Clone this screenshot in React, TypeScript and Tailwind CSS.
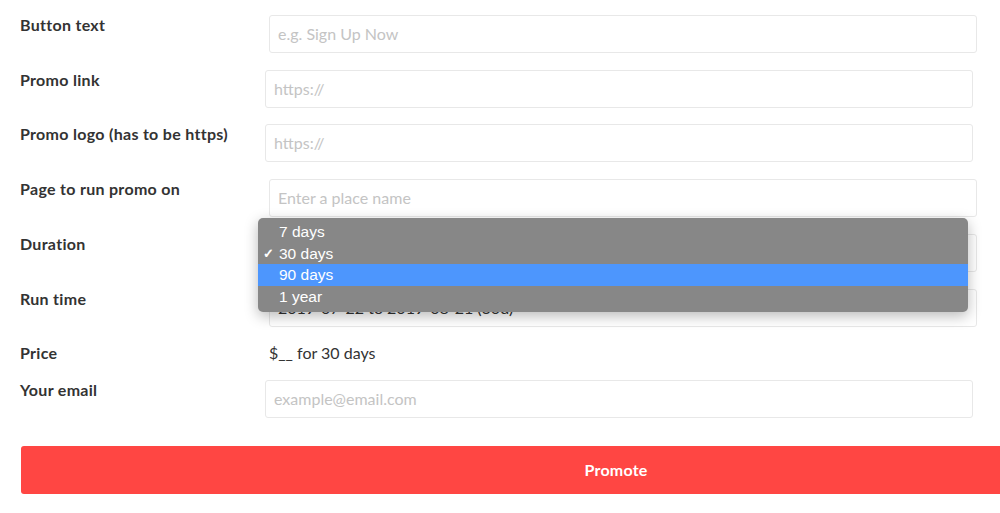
import { ReactNode } from 'react';

const font = { fontFamily: 'Lato, "Noto Sans", sans-serif' };

interface RowProps {
  label: string;
  children: ReactNode;
  className?: string;
}

const Row = ({ label, children, className = '' }: RowProps) => (
  <div className={`grid grid-cols-[245px_1fr] items-start ${className}`}>
    <label className="text-[16px] leading-5 font-bold tracking-[0.3px] text-[#333]">{label}</label>
    {children}
  </div>
);

const Field = ({ placeholder, shift, value }: { placeholder?: string; shift?: boolean; value?: string }) => (
  <div
    className={`h-[38px] w-[708px] rounded-[3px] border border-[#e8e8e8] bg-white flex items-center px-2 text-[16px] ${
      shift ? 'ml-1' : ''
    } ${value ? 'text-[#333]' : 'text-[#c4c4c4]'}`}
  >
    {value ?? placeholder}
  </div>
);

const options = ['7 days', '30 days', '90 days', '1 year'];

const DurationMenu = () => (
  <div
    className="absolute left-[-11px] top-[-16px] w-[710px] rounded-[5px] bg-[#878787] pt-[3px] pb-[5px] shadow-[0_4px_14px_rgba(0,0,0,0.28)] z-10"
    style={{ fontFamily: '"Liberation Sans", Arial, sans-serif' }}
  >
    {options.map((opt) => (
      <div
        key={opt}
        className={`h-[21.5px] flex items-center text-[15.5px] text-white ${opt === '90 days' ? 'bg-[#4d96fd]' : ''}`}
      >
        <span className="w-[21px] pl-[5px] text-[13px] font-bold">{opt === '30 days' ? '✓' : ''}</span>
        {opt}
      </div>
    ))}
  </div>
);

export default function App() {
  return (
    <div className="w-[1000px] h-[513px] overflow-hidden bg-white" style={font}>
      <div className="pl-5 pt-[15px] flex flex-col">
        <Row label="Button text">
          <Field placeholder="e.g. Sign Up Now" shift />
        </Row>
        <Row label="Promo link" className="mt-[17px]">
          <Field placeholder="https://" />
        </Row>
        <Row label="Promo logo (has to be https)" className="mt-4">
          <Field placeholder="https://" />
        </Row>
        <Row label="Page to run promo on" className="mt-[17px]">
          <Field placeholder="Enter a place name" shift />
        </Row>
        <Row label="Duration" className="mt-[17px]">
          <div className="relative ml-1">
            <div className="h-[38px] w-[708px] rounded-[3px] border border-[#e8e8e8] bg-white flex items-center px-2 text-[16px] text-[#333]">
              30 days
            </div>
            <DurationMenu />
          </div>
        </Row>
        <Row label="Run time" className="mt-[17px]">
          <Field value="2019-07-22 to 2019-08-21 (30d)" shift />
        </Row>
        <Row label="Price" className="mt-4">
          <div className="ml-1 text-[16px] leading-5 text-[#333]">$__ for 30 days</div>
        </Row>
        <Row label="Your email" className="mt-[17px]">
          <Field placeholder="example@email.com" />
        </Row>
        <button className="mt-7 ml-px h-12 w-[1190px] shrink-0 rounded-[3px] bg-[#ff4643] text-[16px] font-bold tracking-[0.2px] text-white">
          Promote
        </button>
      </div>
    </div>
  );
}
